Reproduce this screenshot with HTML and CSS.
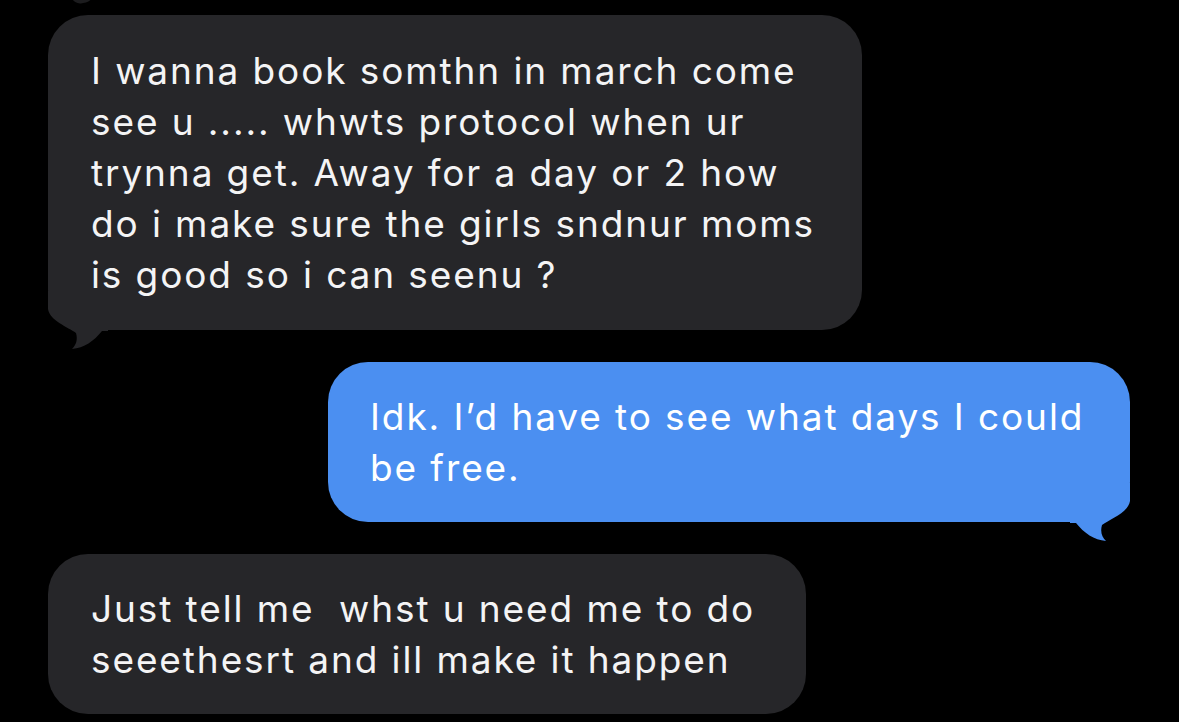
FILE: index.html
```html
<!DOCTYPE html>
<html lang="en">
<head>
    <meta charset="UTF-8">
    <meta name="viewport" content="width=device-width, initial-scale=1.0">
    <title>Messages</title>
    <link rel="stylesheet" href="styles.css">
</head>
<body>
    <div class="thread">
        <div class="prev-tail"></div>

        <div class="msg incoming msg-first">
            <p>I wanna book somthn in march come<br>see u ..... whwts protocol when ur<br>trynna get. Away for a day or 2 how<br>do i make sure the girls sndnur moms<br>is good so i can seenu ?</p>
            <svg class="tail" viewBox="0 0 60 60" width="60" height="60">
                <path d="M0,0 L0,18 C2,30 20,36 28,42 C30,49 28,54 24,58 C36,57 46,50 54,40 L60,40 L60,0 Z"/>
            </svg>
        </div>

        <div class="msg outgoing">
            <p>Idk. I’d have to see what days I could<br>be free.</p>
            <svg class="tail" viewBox="0 0 60 60" width="60" height="60">
                <path d="M0,0 L0,18 C2,30 20,36 28,42 C30,49 28,54 24,58 C36,57 46,50 54,40 L60,40 L60,0 Z"/>
            </svg>
        </div>

        <div class="msg incoming msg-last">
            <p>Just tell me&nbsp; whst u need me to do<br>seeethesrt and ill make it happen</p>
        </div>
    </div>
</body>
</html>
```

FILE: styles.css
```css
body {
    margin: 0;
    padding: 0;
    background-color: #000;
    font-family: Inter, "Noto Sans", "Liberation Sans", sans-serif;
    height: 100vh;
    overflow: hidden;
}
.thread {
    position: relative;
    display: flex;
    flex-direction: column;
    gap: 32px;
    padding: 15px 49px 0 48px;
}
.prev-tail {
    position: absolute;
    left: 72px;
    top: -6px;
    width: 22px;
    height: 9px;
    border-radius: 0 0 12px 12px;
    background-color: #1c1c1e;
    transform: rotate(-12deg);
}
.msg {
    position: relative;
    box-sizing: border-box;
    border-radius: 40px;
    padding: 29px 30px 29px 43px;
}
.msg p {
    margin: 0;
    font-size: 37px;
    letter-spacing: 1.9px;
    line-height: 51px;
    white-space: nowrap;
    position: relative;
    z-index: 1;
}
.msg .tail {
    position: absolute;
    bottom: -21px;
}
.incoming {
    align-self: flex-start;
    background-color: #262629;
    color: #f4f4f5;
}
.incoming .tail {
    left: 0;
    fill: #262629;
}
.outgoing {
    align-self: flex-end;
    background-color: #4b8ff1;
    color: #fff;
    padding-left: 42px;
}
.outgoing .tail {
    right: 0;
    fill: #4b8ff1;
    transform: scaleX(-1);
}
.msg-first {
    width: 814px;
    padding-top: 30px;
    padding-bottom: 30px;
}
.outgoing {
    width: 802px;
}
.msg-last {
    width: 758px;
}
```
